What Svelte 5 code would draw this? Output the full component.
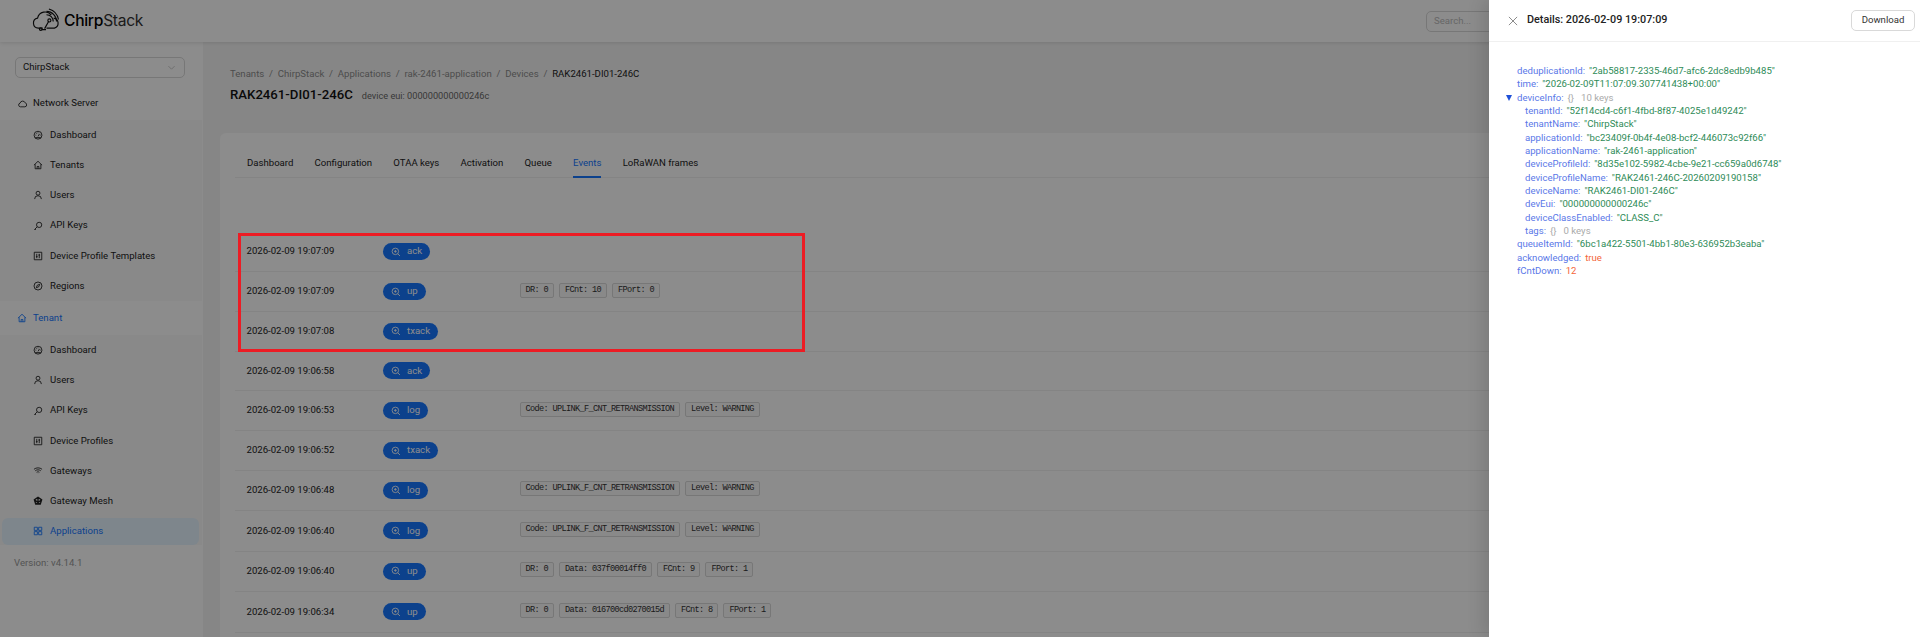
<script>
  const P = {
    cloud: 'M5.5 12.5a3 3 0 0 1-.6-5.9 4.3 4.3 0 0 1 8.2-.4 3.2 3.2 0 0 1-.6 6.3z',
    dash: 'M8 2a6.3 6.3 0 1 0 0 12.6A6.3 6.3 0 0 0 8 2zM3.6 12.2h8.8M8 10.2l2.4-4M4 8.2h1.2M11 8.2h1.2M8 4v1.2M5.2 5.2l.9.9',
    home: 'M1.5 8.3 8 2l6.5 6.3M3.4 6.8V14h9.2V6.8M6.6 14v-3.6h2.8V14',
    user: 'M8 8.2a3.1 3.1 0 1 0 0-6.2 3.1 3.1 0 0 0 0 6.2zM2.6 14.5a5.4 5.4 0 0 1 10.8 0',
    key: 'M9.8 2a4.2 4.2 0 1 1 0 8.4 4.2 4.2 0 0 1 0-8.4zM6.8 9.2 2 14M3.2 12.8l1.4 1.4',
    prof: 'M2 2h12v12H2zM6 4.5v7M10 4.5v7M4.7 9h2.6M8.7 6.5h2.6',
    compass: 'M8 1.6a6.4 6.4 0 1 0 0 12.8A6.4 6.4 0 0 0 8 1.6zM10.8 5.2 9.2 9.2l-4 1.6 1.6-4z',
    wifi: 'M1.5 5.2c3.8-3 9.2-3 13 0M3.6 7.6c2.6-2 6.2-2 8.8 0M5.8 10c1.3-.9 3.1-.9 4.4 0M8 12.4v.2',
    mesh: 'M8 2l5.8 4.2-2.2 6.8H4.4L2.2 6.2zM8 2v11M2.2 6.2l9.4 6.8M13.8 6.2 4.4 13',
    apps: 'M2 2h5v5H2zM9 2h5v5H9zM2 9h5v5H2zM9 9h5v5H9z',
    zoom: 'M7 1.8a5.2 5.2 0 1 0 0 10.4A5.2 5.2 0 0 0 7 1.8zM7 4.8v4.4M4.8 7h4.4M10.8 10.8l3.6 3.6',
    down: 'M2.5 5.5 8 11l5.5-5.5',
    close: 'M2.5 2.5l11 11M13.5 2.5l-11 11'
  };

  const serverMenu = [['dash', 'Dashboard'], ['home', 'Tenants'], ['user', 'Users'], ['key', 'API Keys'], ['prof', 'Device Profile Templates'], ['compass', 'Regions']];
  const tenantMenu = [['dash', 'Dashboard'], ['user', 'Users'], ['key', 'API Keys'], ['prof', 'Device Profiles'], ['wifi', 'Gateways'], ['mesh', 'Gateway Mesh'], ['apps', 'Applications']];
  const crumbs = ['Tenants', 'ChirpStack', 'Applications', 'rak-2461-application', 'Devices'];
  const tabs = ['Dashboard', 'Configuration', 'OTAA keys', 'Activation', 'Queue', 'Events', 'LoRaWAN frames'];
  const warn = ['Code: UPLINK_F_CNT_RETRANSMISSION', 'Level: WARNING'];
  const events = [
    ['2026-02-09 19:07:09', 'ack', []],
    ['2026-02-09 19:07:09', 'up', ['DR: 0', 'FCnt: 10', 'FPort: 0']],
    ['2026-02-09 19:07:08', 'txack', []],
    ['2026-02-09 19:06:58', 'ack', []],
    ['2026-02-09 19:06:53', 'log', warn],
    ['2026-02-09 19:06:52', 'txack', []],
    ['2026-02-09 19:06:48', 'log', warn],
    ['2026-02-09 19:06:40', 'log', warn],
    ['2026-02-09 19:06:40', 'up', ['DR: 0', 'Data: 037f00014ff0', 'FCnt: 9', 'FPort: 1']],
    ['2026-02-09 19:06:34', 'up', ['DR: 0', 'Data: 016700cd0270015d', 'FCnt: 8', 'FPort: 1']]
  ];
  const json = [
    [0, 'deduplicationId', '"2ab58817-2335-46d7-afc6-2dc8edb9b485"', 's'],
    [0, 'time', '"2026-02-09T11:07:09.307741438+00:00"', 's'],
    [0, 'deviceInfo', '10 keys', 'o', true],
    [1, 'tenantId', '"52f14cd4-c6f1-4fbd-8f87-4025e1d49242"', 's'],
    [1, 'tenantName', '"ChirpStack"', 's'],
    [1, 'applicationId', '"bc23409f-0b4f-4e08-bcf2-446073c92f66"', 's'],
    [1, 'applicationName', '"rak-2461-application"', 's'],
    [1, 'deviceProfileId', '"8d35e102-5982-4cbe-9e21-cc659a0d6748"', 's'],
    [1, 'deviceProfileName', '"RAK2461-246C-20260209190158"', 's'],
    [1, 'deviceName', '"RAK2461-DI01-246C"', 's'],
    [1, 'devEui', '"000000000000246c"', 's'],
    [1, 'deviceClassEnabled', '"CLASS_C"', 's'],
    [1, 'tags', '0 keys', 'o'],
    [0, 'queueItemId', '"6bc1a422-5501-4bb1-80e3-636952b3eaba"', 's'],
    [0, 'acknowledged', 'true', 'v'],
    [0, 'fCntDown', '12', 'v']
  ];
</script>

{#snippet icon(name, cls)}
  <svg class="ic {cls} {name}" viewBox="0 0 16 16"><path d={P[name]} /></svg>
{/snippet}

<div class="page">
  <header class="top">
    <div class="logo">
      <svg class="mark" viewBox="0 0 30 24">
        <path d="M11 21H6.5a5.3 5.3 0 0 1-.8-10.5A8 8 0 0 1 20 7.5M22.5 10.5a5.4 5.4 0 0 1 .8 10.5H15" />
        <path d="M15 7a7 7 0 0 1 7 7M15 3.5a10.5 10.5 0 0 1 10.5 10.5M17.5 1a14 14 0 0 1 10 11" />
        <path d="M17.5 13.5 13 21.5M10 22.5h4.5" />
        <circle cx="18" cy="13" r="1.6" />
        <circle cx="9" cy="22" r="1.4" />
      </svg>
      <span class="word"><b>Chirp</b>Stack</span>
    </div>
    <div class="search">Search...</div>
  </header>

  <div class="body">
    <aside class="side">
      <div class="select">ChirpStack {@render icon('down', 'chev')}</div>
      <div class="group">{@render icon('cloud', 'gi')}Network Server</div>
      <ul class="sub">
        {#each serverMenu as [ic, label]}
          <li>{@render icon(ic, 'mi')}{label}</li>
        {/each}
      </ul>
      <div class="group active">{@render icon('home', 'gi')}Tenant</div>
      <ul class="sub">
        {#each tenantMenu as [ic, label]}
          <li class:sel={label === 'Applications'}>{@render icon(ic, 'mi')}{label}</li>
        {/each}
      </ul>
      <div class="version">Version: v4.14.1</div>
    </aside>

    <main class="main">
      <nav class="crumbs">
        {#each crumbs as c}<span>{c}</span><i>/</i>{/each}<em>RAK2461-DI01-246C</em>
      </nav>
      <div class="title"><h1>RAK2461-DI01-246C</h1><small>device eui: 000000000000246c</small></div>
      <section class="card">
        <div class="tabs">
          {#each tabs as t}<span class:on={t === 'Events'}>{t}</span>{/each}
        </div>
        <div class="list">
          {#each events as [time, kind, tags]}
            <div class="row" class:tagged={tags.length > 0}>
              <span class="time">{time}</span>
              <span><span class="badge">{@render icon('zoom', 'zi')}{kind}</span></span>
              <span class="tags">
                {#each tags as t}<code>{t}</code>{/each}
              </span>
            </div>
          {/each}
        </div>
      </section>
    </main>
  </div>

  <div class="mask"></div>
  <div class="mark-rect"></div>

  <aside class="drawer">
    <div class="dh">
      {@render icon('close', 'x')}
      <strong>Details: 2026-02-09 19:07:09</strong>
      <button>Download</button>
    </div>
    <div class="tree">
      {#each json as [lvl, k, v, type, open]}
        <div class="jl" class:nest={lvl === 1}>
          {#if open}<span class="tri"></span>{/if}
          <span class="k">{k}:</span>
          {#if type === 'o'}<span class="br">{'{}'}</span><span class="o">{v}</span>
          {:else}<span class={type}>{v}</span>{/if}
        </div>
      {/each}
    </div>
  </aside>
</div>

<style>
  :global(body) { margin: 0; }
  .page {
    position: relative; width: 1920px; height: 637px; overflow: hidden;
    background: #f5f5f5; color: #222;
    font: 9.6px/1.3 Roboto, "Open Sans", sans-serif;
    display: flex; flex-direction: column;
  }
  .ic { fill: none; stroke: currentColor; stroke-width: 1.4; flex: none; }
  .ic.mesh { stroke-width: 2.2; }

  .top {
    height: 42px; flex: none; background: #fff; display: flex; align-items: center;
    box-shadow: 0 1px 4px rgba(0,0,0,.12); position: relative; z-index: 1;
    padding-left: 32px;
  }
  .logo { display: flex; align-items: center; gap: 3px; }
  .mark { width: 29px; height: 23px; fill: none; stroke: #111; stroke-width: 1.2; margin-top: -3px; }
  .word { font: 400 15.6px/1 Inter, sans-serif; color: #333; letter-spacing: -.3px; }
  .word b { font-weight: 500; color: #000; }
  .search {
    margin-left: auto; margin-right: 370px; width: 124px; height: 21px; box-sizing: border-box;
    border: 1px solid #d9d9d9; border-radius: 5px; padding: 3px 7px; color: #bbb;
  }

  .body { flex: 1; display: flex; min-height: 0; }
  .side { width: 203px; flex: none; background: #fff; padding-top: 15px; box-sizing: border-box; }
  .select {
    margin: 0 18px 9px 15px; height: 21px; box-sizing: border-box; border: 1px solid #d9d9d9;
    border-radius: 5px; padding: 0 7px; display: flex; align-items: center; justify-content: space-between;
  }
  .chev { width: 9px; height: 9px; color: #bbb; margin-right: 1px; }
  .group { height: 33px; display: flex; align-items: center; padding-left: 17px; gap: 6px; margin-right: 1px; }
  .group.active { height: 34px; }
  .gi { width: 10px; height: 10px; }
  .active { color: #1677ff; }
  .sub { list-style: none; margin: 0; padding: 0; background: #fafafa; margin-right: 1px; }
  .sub li { height: 30.2px; display: flex; align-items: center; padding-left: 33px; gap: 7px; }
  .mi { width: 10px; height: 10px; }
  .sub li.sel { background: #e6f4ff; color: #1677ff; border-radius: 6px; margin: 1.5px 3px 1.5px 2px; height: 27.2px; padding-left: 31px; }
  .version { padding: 11px 14px; color: #999; }

  .main { flex: 1; min-width: 0; padding: 24px 0 0 17px; }
  .crumbs { display: flex; gap: 4.8px; height: 16px; align-items: center; padding-left: 10px; color: #8c8c8c; }
  .crumbs i { font-style: normal; }
  .crumbs em { font-style: normal; color: #222; }
  .title { display: flex; align-items: baseline; gap: 9px; padding-left: 10px; margin-top: 4px; height: 22px; }
  h1 { margin: 0; font-size: 13.2px; font-weight: 500; color: #111; }
  small { font-size: 9.2px; color: #666; }
  .card { margin-top: 25px; background: #fff; border-radius: 6px 0 0 0; padding: 0 0 0 15px; height: 560px; }
  .tabs { display: flex; gap: 21.2px; height: 44px; padding-left: 12px; border-bottom: 1px solid #f0f0f0; }
  .tabs span { padding-top: 24px; box-sizing: border-box; height: 45px; }
  .tabs .on { color: #1677ff; border-bottom: 2px solid #1677ff; }
  .list { margin-top: 54.5px; }
  .row {
    display: grid; grid-template-columns: 136.5px 136.5px 1fr; height: 39.3px; box-sizing: border-box;
    align-items: center; padding-left: 11.5px; border-bottom: 1px solid #f0f0f0;
  }
  .row.tagged { height: 40.5px; }
  .badge {
    display: inline-flex; align-items: center; height: 17px; border-radius: 9px; background: #1677ff;
    color: #fff; padding: 0 8px 0 8px; gap: 6px;
  }
  .zi { width: 10px; height: 10px; }
  .tags { display: flex; gap: 5px; margin-top: -3px; }
  code {
    font: 8.6px/13px "Liberation Mono", monospace; letter-spacing: -.66px; padding: 0 5px;
    border: 1px solid #d9d9d9; border-radius: 2px; background: #fafafa; color: #333;
  }

  .mask { position: absolute; inset: 0; z-index: 2; background: rgba(0,0,0,.45); }
  .mark-rect {
    position: absolute; z-index: 3; left: 238px; top: 233px; width: 567px; height: 119px; box-sizing: border-box;
    border: 3px solid #ed1c24;
  }
  .drawer {
    position: absolute; z-index: 3; top: 0; right: 0; bottom: 0; width: 431px; background: #fff;
    box-shadow: -6px 0 16px rgba(0,0,0,.12);
  }
  .dh { height: 42px; box-sizing: border-box; border-bottom: 1px solid #f0f0f0; display: flex; align-items: center; padding: 0 5px 0 18px; gap: 8px; }
  .x { width: 12px; height: 12px; color: #666; stroke-width: 1; }
  strong { font-weight: 500; font-size: 10.8px; flex: 1; }
  button {
    width: 64px; height: 21px; padding: 0; background: #fff; border: 1px solid #d9d9d9; border-radius: 5px;
    font: inherit; color: #333;
  }
  .tree { padding: 22px 0 0 28px; line-height: 13.35px; }
  .jl { position: relative; white-space: nowrap; height: 13.35px; display: flex; gap: 4px; }
  .jl.nest { padding-left: 8px; }
  .tri {
    position: absolute; left: -11px; top: 4px; width: 0; height: 0;
    border-left: 3.5px solid transparent; border-right: 3.5px solid transparent; border-top: 6px solid #1f50d8;
  }
  .k { color: #5a78e8; }
  .s { color: #2e8b57; }
  .v { color: #f4663a; }
  .br, .o { color: #aaa; }
  .o { margin-left: 3px; }
</style>
